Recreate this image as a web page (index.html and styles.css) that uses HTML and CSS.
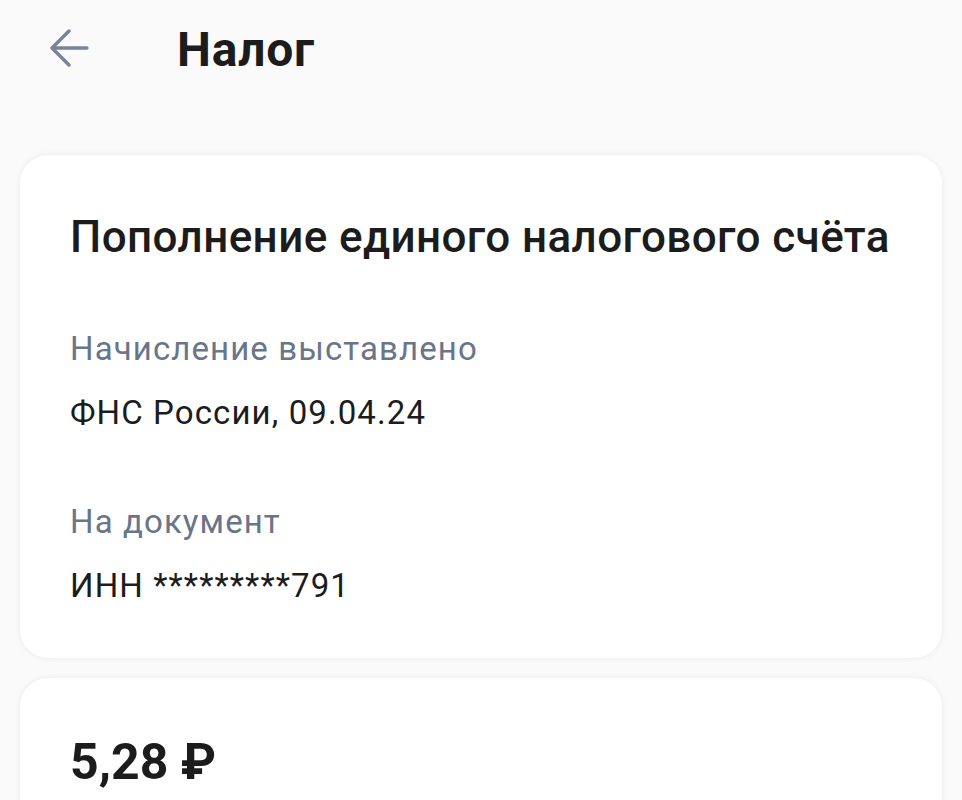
FILE: index.html
```html
<!DOCTYPE html>
<html lang="ru">
<head>
    <meta charset="UTF-8">
    <meta name="viewport" content="width=device-width, initial-scale=1.0">
    <title>Налог</title>
    <link rel="stylesheet" href="styles.css">
</head>
<body>
    <header class="topbar">
        <button class="back" aria-label="Назад">
            <svg width="40" height="40" viewBox="0 0 40 40">
                <path d="M38 19H3 M20 2L3 19L20 36" fill="none" stroke="#7b8497" stroke-width="3.4" stroke-linecap="round" stroke-linejoin="round"/>
            </svg>
        </button>
        <h1 class="page-title">Налог</h1>
    </header>

    <section class="card info">
        <h2 class="card-title">Пополнение единого налогового счёта</h2>
        <div class="field">
            <div class="label">Начисление выставлено</div>
            <div class="value">ФНС России, 09.04.24</div>
        </div>
        <div class="field">
            <div class="label">На документ</div>
            <div class="value">ИНН *********791</div>
        </div>
    </section>

    <section class="card amount">
        <div class="sum">5,28 ₽</div>
    </section>
</body>
</html>
```

FILE: styles.css
```css
body {
  margin: 0;
  background: #fafafa;
  font-family: Roboto, "Liberation Sans", sans-serif;
  color: #1c1c1c;
  overflow: hidden;
}

.topbar {
  display: flex;
  align-items: center;
  height: 98px;
  padding: 0 0 0 48px;
}

.back {
  border: 0;
  background: none;
  padding: 0;
  width: 42px;
  height: 42px;
  display: flex;
  align-items: center;
  justify-content: center;
}

.page-title {
  margin: 0 0 0 87px;
  font-size: 48px;
  font-weight: 700;
  letter-spacing: 0.8px;
}

.card {
  background: #fff;
  margin: 0 20px 20px;
  border-radius: 28px;
  box-shadow: 0 0 6px rgba(0, 0, 0, 0.07);
  padding: 0 50px;
}

.info {
  margin-top: 57px;
  padding-top: 56px;
  padding-bottom: 53px;
}

.card-title {
  margin: 0 0 66px;
  font-size: 44px;
  font-weight: 500;
  letter-spacing: 0.4px;
}

.field + .field {
  margin-top: 70px;
}

.label {
  color: #6a7589;
  font-size: 33px;
  letter-spacing: 1.1px;
}

.value {
  margin-top: 25px;
  font-size: 33px;
  letter-spacing: 1.1px;
}

.amount {
  height: 200px;
  padding-top: 55px;
}

.sum {
  font-size: 50px;
  font-weight: 700;
}
```
